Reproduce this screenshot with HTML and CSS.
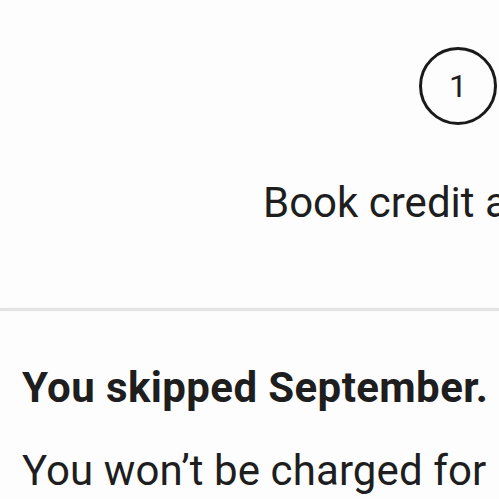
FILE: index.html
```html
<!DOCTYPE html>
<html lang="en">
<head>
<meta charset="utf-8">
<link rel="stylesheet" href="styles.css">
</head>
<body>
<div class="page">
  <section class="steps">
    <div class="step">
      <div class="step-num">1</div>
      <div class="step-label">Book credit available</div>
    </div>
  </section>
  <hr class="divider">
  <section class="notice">
    <h2 class="notice-title">You skipped September.</h2>
    <p class="notice-body">You won’t be charged for this month.</p>
  </section>
</div>
</body>
</html>
```

FILE: styles.css
```css
html, body {
  margin: 0;
  padding: 0;
  background: #fdfdfd;
  overflow: hidden;
}
.page {
  width: 499px;
  height: 499px;
  overflow: hidden;
  font-family: Roboto, "Noto Sans", sans-serif;
  color: #1e1e1e;
}
.steps {
  display: flex;
  padding: 47px 0 80px 263px;
}
.step {
  display: flex;
  flex-direction: column;
  width: 390px;
  flex: none;
}
.step-num {
  align-self: center;
  width: 72px;
  height: 72px;
  border: 3px solid #1a1a1a;
  border-radius: 50%;
  display: flex;
  align-items: center;
  justify-content: center;
  font-size: 32px;
  line-height: 1;
  font-weight: 400;
}
.step-label {
  margin-top: 53px;
  font-size: 42px;
  line-height: 50px;
  white-space: nowrap;
}
.divider {
  margin: 0;
  border: 0;
  height: 3px;
  background: #e3e3e3;
  box-shadow: 0 0 2px rgba(0,0,0,0.06);
}
.notice {
  padding: 52px 12px 0 22px;
}
.notice-title {
  margin: 0;
  font-size: 42px;
  line-height: 50px;
  font-weight: 700;
  letter-spacing: 0.4px;
  white-space: nowrap;
}
.notice-body {
  margin: 33px 0 0;
  font-size: 42px;
  line-height: 50px;
  font-weight: 400;
  letter-spacing: 0.1px;
}
```
